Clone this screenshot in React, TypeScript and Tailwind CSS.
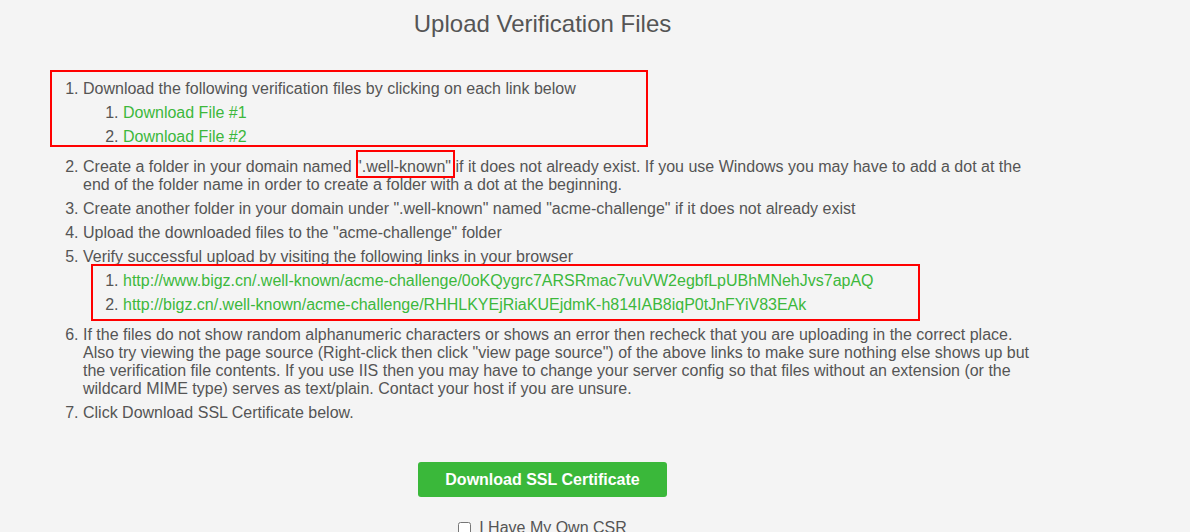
export default function App() {
  return (
    // Page
    <div className="min-h-screen bg-[#f4f4f4] font-['Liberation_Sans',Arial,sans-serif] text-[#555]">
      <div className="relative w-[1085px] px-[43px]">
        <h2 className="text-center text-[24px] leading-[26px] pt-[11px]">
          Upload Verification Files
        </h2>

        {/* Steps */}
        <ol className="list-decimal pl-[40px] mt-[43px] text-[16px] leading-[18px]">
          <li className="mb-[6px]">
            Download the following verification files by clicking on each link below
            <ol className="list-decimal pl-[40px] pb-[6px]">
              <li className="mt-[6px]">
                <a href="#" className="text-[#3cb83c]">Download File #1</a>
              </li>
              <li className="mt-[6px]">
                <a href="#" className="text-[#3cb83c]">Download File #2</a>
              </li>
            </ol>
          </li>
          <li className="mb-[6px]">
            Create a folder in your domain named ".well-known" if it does not already exist. If you use
            Windows you may have to add a dot at the end of the folder name in order to create a folder
            with a dot at the beginning.
          </li>
          <li className="mb-[6px]">
            Create another folder in your domain under ".well-known" named "acme-challenge" if it does
            not already exist
          </li>
          <li className="mb-[6px]">Upload the downloaded files to the "acme-challenge" folder</li>
          <li className="mb-[6px]">
            Verify successful upload by visiting the following links in your browser
            <ol className="list-decimal pl-[40px] pb-[6px]">
              <li className="mt-[6px]">
                <a href="#" className="text-[#3cb83c]">
                  http://www.bigz.cn/.well-known/acme-challenge/0oKQygrc7ARSRmac7vuVW2egbfLpUBhMNehJvs7apAQ
                </a>
              </li>
              <li className="mt-[6px]">
                <a href="#" className="text-[#3cb83c]">
                  http://bigz.cn/.well-known/acme-challenge/RHHLKYEjRiaKUEjdmK-h814IAB8iqP0tJnFYiV83EAk
                </a>
              </li>
            </ol>
          </li>
          <li className="mb-[6px]">
            If the files do not show random alphanumeric characters or shows an error then recheck that
            you are uploading in the correct place. Also try viewing the page source (Right-click then
            click "view page source") of the above links to make sure nothing else shows up but the
            verification file contents. If you use IIS then you may have to change your server config so
            that files without an extension (or the wildcard MIME type) serves as text/plain. Contact
            your host if you are unsure.
          </li>
          <li>Click Download SSL Certificate below.</li>
        </ol>

        {/* Actions */}
        <div className="flex flex-col items-center mt-[40px]">
          <button className="w-[249px] h-[35px] rounded-[3px] bg-[#3ab83a] text-white font-bold text-[16px]">
            Download SSL Certificate
          </button>
          <label className="flex items-center gap-[8px] mt-[22px] text-[16px] leading-[18px]">
            <input type="checkbox" className="w-[13px] h-[13px]" />
            I Have My Own CSR
          </label>
        </div>

        {/* Annotation boxes */}
        <div className="absolute left-[50px] top-[70px] w-[598px] h-[77px] border-2 border-[#f00]" />
        <div className="absolute left-[356px] top-[150px] w-[99px] h-[28px] border-2 border-[#f00]" />
        <div className="absolute left-[91px] top-[264px] w-[829px] h-[57px] border-2 border-[#f00]" />
      </div>
    </div>
  );
}
